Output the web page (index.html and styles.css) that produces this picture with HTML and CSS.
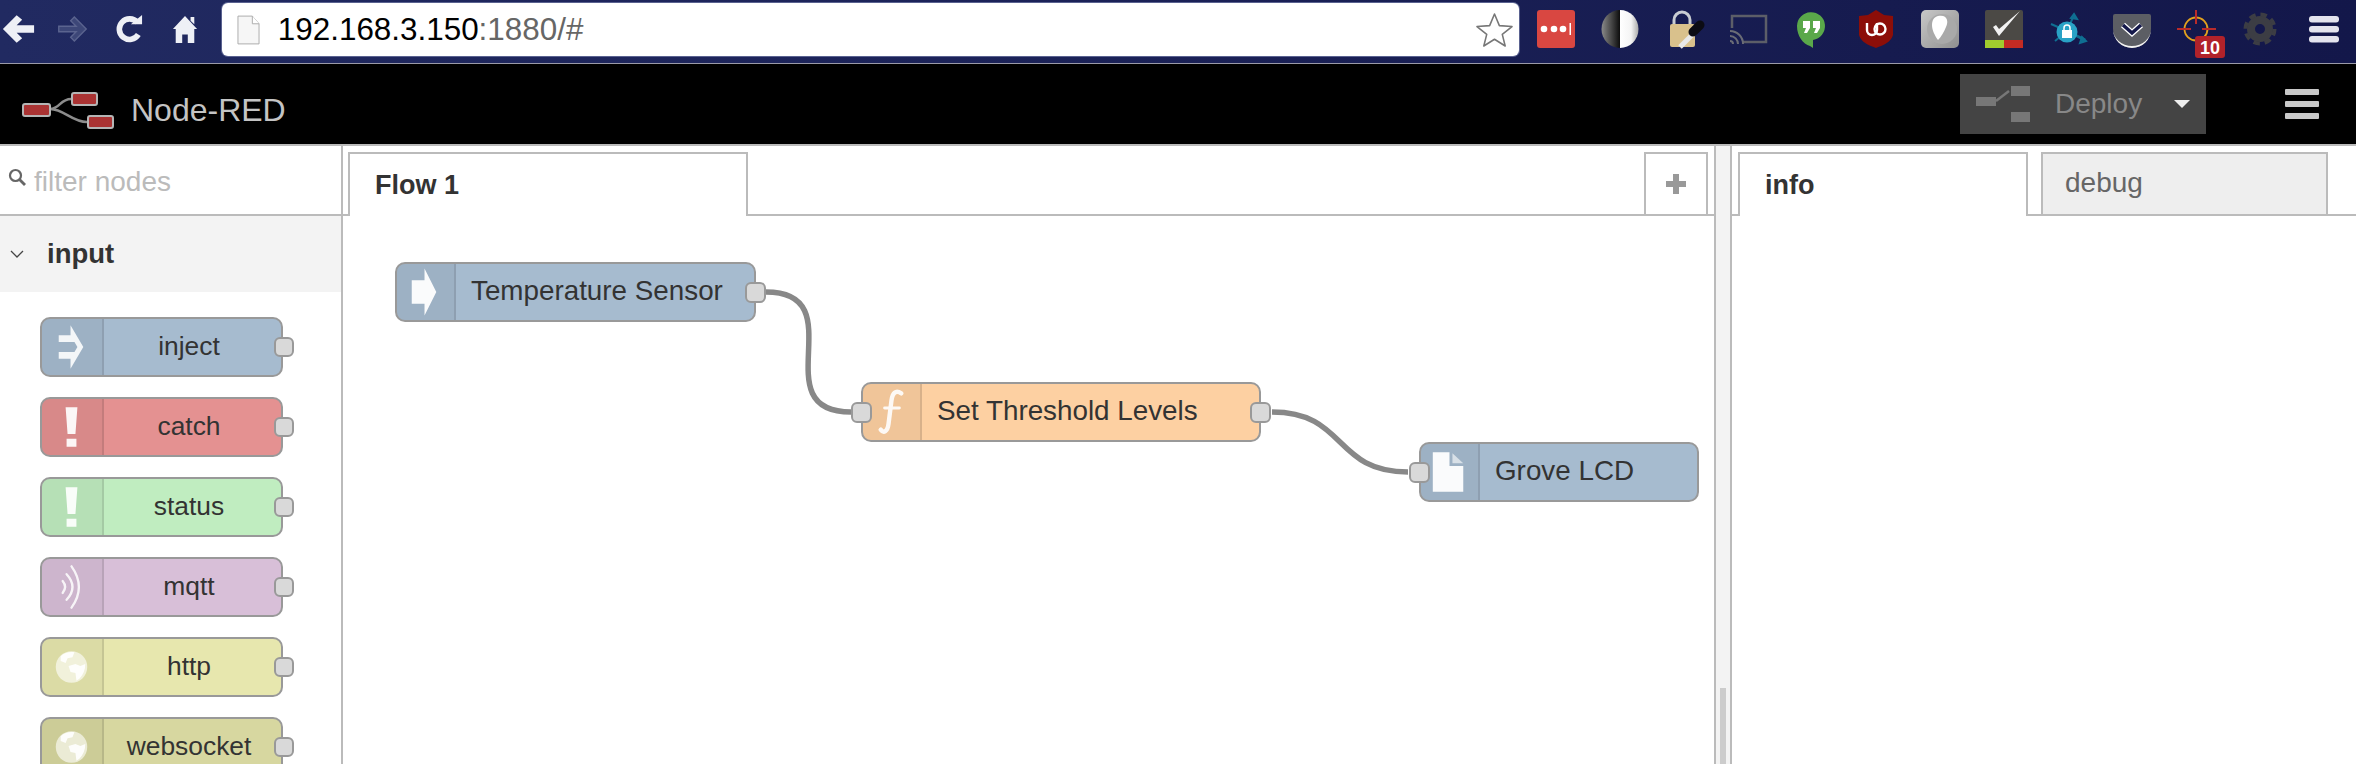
FILE: index.html
```html
<!DOCTYPE html>
<html lang="en">
<head>
<meta charset="utf-8">
<title>Node-RED</title>
<link rel="stylesheet" href="styles.css">
</head>
<body>
<div class="chrome">
  <div class="nav">
    <svg class="nav-icon back" viewBox="0 0 36 30"><path d="M16 0 1 15l15 15 6-5-6-6h19v-8H16l6-6z" fill="#eef0f6"/></svg>
    <svg class="nav-icon forward" viewBox="0 0 36 30"><path d="M20 2 33 15 20 28l-4-4 6-6H3v-6h19l-6-6z" fill="#3d4778" stroke="#5b648f" stroke-width="1.5"/></svg>
    <svg class="nav-icon reload" viewBox="0 0 30 30"><path d="M24 8A11 11 0 1 0 25 21" fill="none" stroke="#eef0f6" stroke-width="6"/><path d="M17 10h12V0z" fill="#eef0f6"/></svg>
    <svg class="nav-icon home" viewBox="0 0 28 30"><path d="M14 1 27 15h-3v15h-7v-9h-6v9H4V15H1z" fill="#eef0f6"/><path d="M20 2h4v8l-4-4z" fill="#eef0f6"/></svg>
  </div>
  <div class="omnibox">
    <svg class="page-icon" viewBox="0 0 24 31"><path d="M1 1h15l7 8v21H1z" fill="#f6f6f6" stroke="#aaa"/><path d="M16 1v8h7" fill="#fff" stroke="#aaa"/></svg>
    <span class="url"><span class="url-host">192.168.3.150</span>:1880/#</span>
    <svg class="star" viewBox="0 0 38 36"><path d="M19 2l5 12 13 1-10 8 3 12-11-7-11 7 3-12-10-8 13-1z" fill="#fff" stroke="#777" stroke-width="1.6" stroke-linejoin="round"/></svg>
  </div>
  <div class="extensions">
    <svg class="ext" viewBox="0 0 64 63"><rect x="13" y="10" width="38" height="38" rx="3" fill="#d94741"/><circle cx="20" cy="29" r="3.3" fill="#fff"/><circle cx="30" cy="29" r="3.3" fill="#fff"/><circle cx="39" cy="29" r="3.3" fill="#fff"/><rect x="45.500" y="23" width="1.500" height="12" fill="#fff"/></svg>
    <svg class="ext" viewBox="0 0 64 63"><defs><linearGradient id="contrast"><stop offset="0" stop-color="#8a8a8a"/><stop offset=".5" stop-color="#0c0c0c"/><stop offset=".5" stop-color="#fff"/><stop offset=".8" stop-color="#f4f4f4"/><stop offset="1" stop-color="#aaa"/></linearGradient></defs><ellipse cx="32" cy="29" rx="18.500" ry="19" fill="url(#contrast)"/></svg>
    <svg class="ext" viewBox="0 0 64 63"><path d="M22 25v-5a8 8 0 0 1 16 0v5" fill="none" stroke="#c8ccd2" stroke-width="3"/><rect x="18" y="24" width="25" height="23" rx="2" fill="#d9c18c"/><path d="M28 47 43 32" stroke="#e8e8e8" stroke-width="5"/><path d="M41 32 48 25" stroke="#0c0c14" stroke-width="9" stroke-linecap="round"/></svg>
    <svg class="ext" viewBox="0 0 64 63"><path d="M16 28V16h34v26H27" fill="none" stroke="#5c5e68" stroke-width="2.500"/><g fill="none" stroke="#6a6c76" stroke-width="2"><path d="M14 31a13 13 0 0 1 13 13"/><path d="M14 36a8 8 0 0 1 8 8"/><path d="M14 41a3 3 0 0 1 3 3"/></g></svg>
    <svg class="ext" viewBox="0 0 64 63"><path d="M17 26a14 14 0 1 1 16 14v8l-3-2c-7-2-13-10-13-20z" fill="#5aa84a"/><path d="M23 21h7v7l-3 5h-3l2-5h-3zM33 21h7v7l-3 5h-3l2-5h-3z" fill="#fff"/></svg>
    <svg class="ext" viewBox="0 0 64 63"><path d="M32 10 40 15 49 16V35C47 42 40 45 32 48 24 45 17 42 15 35V16L24 15z" fill="#8c0e08"/><path d="M23 23v7a5 5 0 0 0 10 0v-7" fill="none" stroke="#fff" stroke-width="2.400"/><circle cx="36" cy="29" r="5.500" fill="none" stroke="#fff" stroke-width="2.400"/></svg>
    <svg class="ext" viewBox="0 0 64 63"><defs><linearGradient id="greyext" x1="0" y1="0" x2="1" y2="1"><stop offset="0" stop-color="#c8c8c8"/><stop offset="1" stop-color="#8f8f8f"/></linearGradient></defs><rect x="13" y="10" width="38" height="38" rx="5" fill="url(#greyext)"/><circle cx="34" cy="29" r="15" fill="#a9a9a9"/><path d="M30 16c9-2 11 5 8 11-2 5-5 10-8 13-3-4-6-10-6-15 0-5 2-8 6-9z" fill="#fff"/></svg>
    <svg class="ext" viewBox="0 0 64 63"><rect x="13" y="10" width="38" height="38" rx="2" fill="#4b4945"/><rect x="13" y="40" width="19" height="8" fill="#a0cb2e"/><rect x="32" y="40" width="19" height="8" fill="#c32b23"/><path d="M21 27l6 9L48 11l-21 18-3-4z" fill="#f2f2f2"/></svg>
    <svg class="ext" viewBox="0 0 64 63"><g stroke="#0f6f92" stroke-width="2" fill="#0f6f92"><path d="M31 31 38 15"/><path d="M31 31 15 24"/><path d="M31 31 49 40" stroke-width="3"/><path d="M31 31 19 41"/><path d="M38 14l3 5-6-1zM50 41l-6 2 2-6z"/></g><circle cx="31" cy="32" r="10.500" fill="#29a2c6"/><rect x="26" y="30" width="10" height="8" fill="#fff"/><path d="M28 31v-3a3 3 0 0 1 6 0v3" fill="none" stroke="#fff" stroke-width="1.500"/></svg>
    <svg class="ext" viewBox="0 0 64 63"><path d="M13 16a2 2 0 0 1 2-2h34a2 2 0 0 1 2 2v13a19 19 0 0 1-38 0z" fill="#5c5e64"/><path d="M13 29a19 19 0 0 0 38 0 19 17 0 0 1-38 0z" fill="#f2f2f2"/><path d="M23 25l9 8 9-8" fill="none" stroke="#fff" stroke-width="6"/><path d="M23 25l9 8 9-8" fill="none" stroke="#14184a" stroke-width="3.500"/></svg>
    <svg class="ext" viewBox="0 0 64 63"><circle cx="32" cy="29" r="11.500" fill="none" stroke="#e2a11e" stroke-width="1.800"/><path d="M32 10v14M13 29h14M38 29h14" stroke="#b92b2b" stroke-width="2"/><rect x="31" y="36" width="30" height="22" rx="3" fill="#b1222a"/><text class="badge" x="46" y="54">10</text></svg>
    <svg class="ext" viewBox="0 0 64 63"><circle cx="32" cy="29" r="9" fill="none" stroke="#3c3d44" stroke-width="8"/><circle cx="32" cy="29" r="14.500" fill="none" stroke="#3c3d44" stroke-width="4" stroke-dasharray="6.500 4.890"/></svg>
    <svg class="ext" viewBox="0 0 64 63"><g fill="#e4e4ee"><rect x="17" y="16" width="30" height="6.500" rx="3"/><rect x="17" y="26" width="30" height="6.500" rx="3"/><rect x="17" y="36" width="30" height="6.500" rx="3"/></g></svg>
  </div>
</div>

<header class="app-header">
  <svg class="logo" viewBox="0 0 92 38"><g fill="none" stroke="#8c8c8c" stroke-width="2.500"><path d="M28 17C38 17 38 7 49 7"/><path d="M28 17C42 17 50 30 65 30"/></g><g fill="#aa3333" stroke="#b5b5b5" stroke-width="2"><rect x="1" y="12" width="27" height="12" rx="2"/><rect x="50" y="1" width="25" height="12" rx="2"/><rect x="66" y="24" width="25" height="12" rx="2"/></g></svg>
  <span class="app-title">Node-RED</span>
  <button class="deploy" type="button">
    <svg class="deploy-icon" viewBox="0 0 54 36"><g fill="#777"><rect x="0" y="11" width="20" height="9"/><rect x="35" y="0" width="19" height="10"/><rect x="35" y="26" width="19" height="10"/></g><path d="M20 15 33 5" stroke="#777" stroke-width="2.500" fill="none"/></svg>
    <span class="deploy-label">Deploy</span>
    <span class="deploy-caret"></span>
  </button>
  <div class="menu-button"><span></span><span></span><span></span></div>
</header>

<main class="main">
  <aside class="palette">
    <div class="filter">
      <svg class="search" viewBox="0 0 18 18"><circle cx="7.500" cy="7.500" r="5.500" fill="none" stroke="#666" stroke-width="2.200"/><path d="M11.500 11.500 17 17" stroke="#666" stroke-width="2.800"/></svg>
      <span class="filter-text">filter nodes</span>
    </div>
    <div class="category">
      <svg class="chevron" viewBox="0 0 14 8"><path d="M1 1l6 6 6-6" fill="none" stroke="#444" stroke-width="1.300"/></svg>
      <span class="category-name">input</span>
    </div>
    <div class="palette-list">
      <div class="pnode blue">
        <div class="pnode-icon"><svg viewBox="0 0 61 56"><path d="M17 16H29V6L42 28 29 50V40H17V33H33L36 28 33 23H17Z" fill="#fff" opacity=".88"/></svg></div>
        <div class="pnode-label">inject</div><span class="pport"></span>
      </div>
      <div class="pnode red">
        <div class="pnode-icon"><svg viewBox="0 0 61 56"><path d="M24 8H36L34 35H26ZM25 40H35V48H25Z" fill="#fff" opacity=".92"/></svg></div>
        <div class="pnode-label">catch</div><span class="pport"></span>
      </div>
      <div class="pnode green">
        <div class="pnode-icon"><svg viewBox="0 0 61 56"><path d="M24 8H36L34 35H26ZM25 40H35V48H25Z" fill="#fff" opacity=".92"/></svg></div>
        <div class="pnode-label">status</div><span class="pport"></span>
      </div>
      <div class="pnode purple">
        <div class="pnode-icon"><svg viewBox="0 0 61 56"><g fill="none" stroke="#fff" stroke-width="2.400" stroke-linecap="round" opacity=".85"><path d="M30 7Q45 28 30 49"/><path d="M25 15Q37 28 25 41"/><path d="M21 22Q26 28 21 34"/></g></svg></div>
        <div class="pnode-label">mqtt</div><span class="pport"></span>
      </div>
      <div class="pnode yellow">
        <div class="pnode-icon"><svg viewBox="0 0 61 56"><circle cx="30" cy="28" r="16" fill="#fff" opacity=".6"/><path d="M19 17c4-4 10-5 14-4l-2 5-5 1-2 5-5-2zM27 27l7-2 5 2 5-2c0 6-2 11-6 15l-3 2-1-8-5-1z" fill="#fff" opacity=".9"/></svg></div>
        <div class="pnode-label">http</div><span class="pport"></span>
      </div>
      <div class="pnode olive">
        <div class="pnode-icon"><svg viewBox="0 0 61 56"><circle cx="30" cy="28" r="16" fill="#fff" opacity=".6"/><path d="M19 17c4-4 10-5 14-4l-2 5-5 1-2 5-5-2zM27 27l7-2 5 2 5-2c0 6-2 11-6 15l-3 2-1-8-5-1z" fill="#fff" opacity=".9"/></svg></div>
        <div class="pnode-label">websocket</div><span class="pport"></span>
      </div>
    </div>
  </aside>

  <section class="workspace">
    <div class="tabs">
      <div class="tab flow-tab">Flow 1</div>
      <div class="add-tab"><svg viewBox="0 0 22 22"><path d="M11 1v20M1 11h20" stroke="#999" stroke-width="6"/></svg></div>
    </div>
    <div class="canvas">
      <svg class="wires" viewBox="0 0 1371 548"><g fill="none" stroke="#888" stroke-width="5.500"><path d="M423 76C513 76 418 196 508 196"/><path d="M929 196C1004 196 990 256 1065 256"/></g></svg>
      <div class="fnode blue temp">
        <div class="fnode-icon narrow"><svg viewBox="0 0 58 56"><path d="M15 16H28V4L40 28 28 52V40H15Z" fill="#fff" opacity=".95"/></svg></div>
        <div class="fnode-label">Temperature Sensor</div><span class="port out"></span>
      </div>
      <div class="fnode orange thresh">
        <span class="port in"></span>
        <div class="fnode-icon"><svg viewBox="0 0 58 56"><g fill="none" stroke="#fff" opacity=".9" stroke-linecap="round"><path d="M39 9C33 5 30 9 29 16L26 40C25 48 21 50 18 46" stroke-width="4.500"/><path d="M22 24H37" stroke-width="3"/></g></svg></div>
        <div class="fnode-label">Set Threshold Levels</div><span class="port out"></span>
      </div>
      <div class="fnode blue lcd">
        <span class="port in"></span>
        <div class="fnode-icon"><svg viewBox="0 0 58 56"><path d="M12 8H29V22H43V48H12Z" fill="#fff" opacity=".95"/><path d="M32 9 43 19H32Z" fill="#fff" opacity=".6"/></svg></div>
        <div class="fnode-label">Grove LCD</div>
      </div>
    </div>
  </section>

  <div class="separator"><span class="scroll-thumb"></span></div>

  <aside class="sidebar">
    <div class="tabs side-tabs">
      <div class="tab info-tab">info</div>
      <div class="debug-tab">debug</div>
    </div>
  </aside>
</main>
</body>
</html>
```

FILE: styles.css
```css
* {
  box-sizing: border-box;
}

html,
body {
  margin: 0;
  height: 764px;
  overflow: hidden;
  background: #fff;
  font-family: "Liberation Sans", Arial, sans-serif;
  color: #333;
}

body {
  display: flex;
  flex-direction: column;
}

/* Browser chrome */
.chrome {
  flex: 0 0 64px;
  display: flex;
  align-items: flex-start;
  background: linear-gradient(90deg, #212a61 0%, #1c2359 40%, #13174a 100%);
  border-bottom: 1px solid #9a9aa8;
}

.nav {
  position: relative;
  width: 222px;
  height: 63px;
}

.nav-icon {
  position: absolute;
  top: 15px;
  height: 28px;
}

.back { left: 2px; width: 33px; }
.forward { left: 56px; width: 33px; }
.reload { left: 115px; width: 28px; }
.home { left: 172px; width: 26px; }

.omnibox {
  width: 1298px;
  height: 53px;
  margin-top: 3px;
  display: flex;
  align-items: center;
  padding: 0 6px 0 15px;
  background: #fff;
  border-radius: 6px;
  box-shadow: 0 0 0 1px #5a6290;
}

.page-icon {
  width: 23px;
  height: 30px;
  flex: none;
}

.url {
  margin-left: 18px;
  flex: 1;
  font-size: 31.4px;
  line-height: 53px;
  color: #666;
  white-space: nowrap;
}

.url-host {
  color: #000;
}

.star {
  width: 37px;
  height: 35px;
  flex: none;
}

.extensions {
  display: flex;
  margin-left: 5px;
}

.ext {
  width: 64px;
  height: 63px;
  flex: none;
}

.badge {
  font-size: 18px;
  font-weight: 700;
  fill: #fff;
  text-anchor: middle;
}

/* App header */
.app-header {
  flex: 0 0 82px;
  display: flex;
  align-items: flex-start;
  background: #000;
  border-bottom: 2px solid #bbb;
}

.logo {
  width: 92px;
  height: 38px;
  margin: 28px 0 0 22px;
  flex: none;
}

.app-title {
  margin-left: 17px;
  font-size: 32px;
  line-height: 92px;
  height: 80px;
  color: #c4c4c4;
}

.deploy {
  width: 246px;
  height: 60px;
  margin: 10px 0 0 auto;
  padding: 0;
  border: 0;
  background: #444;
  display: flex;
  align-items: center;
  font-family: inherit;
}

.deploy-icon {
  width: 54px;
  height: 36px;
  margin-left: 16px;
  flex: none;
}

.deploy-label {
  margin-left: 25px;
  font-size: 28px;
  color: #888;
}

.deploy-caret {
  width: 0;
  height: 0;
  margin-left: 32px;
  border-style: solid;
  border-width: 8px 8.500px 0;
  border-color: #eee transparent transparent;
}

.menu-button {
  width: 34px;
  margin: 25px 37px 0 79px;
  display: flex;
  flex-direction: column;
  gap: 6px;
}

.menu-button span {
  display: block;
  height: 6px;
  border-radius: 1px;
  background: #c8c8c8;
}

/* Main row */
.main {
  flex: 1;
  min-height: 0;
  display: flex;
}

.palette {
  flex: 0 0 343px;
  border-right: 2px solid #bbb;
  overflow: hidden;
}

.filter {
  height: 70px;
  display: flex;
  align-items: center;
  padding: 0 0 0 8px;
  border-bottom: 2px solid #bbb;
}

.search {
  width: 18px;
  height: 18px;
  margin-top: -6px;
  flex: none;
}

.filter-text {
  margin-left: 8px;
  margin-top: 4px;
  font-size: 28px;
  color: #bbb;
}

.category {
  height: 76px;
  display: flex;
  align-items: center;
  padding-left: 10px;
  background: #f3f3f3;
}

.chevron {
  width: 14px;
  height: 8px;
  flex: none;
}

.category-name {
  margin-left: 23px;
  font-size: 27.500px;
  font-weight: 700;
}

.palette-list {
  display: flex;
  flex-direction: column;
  gap: 20px;
  padding: 25px 0 0 40px;
}

.pnode,
.fnode {
  position: relative;
  flex: none;
  height: 60px;
  display: flex;
  border: 2px solid #999;
  border-radius: 10px;
}

.pnode {
  width: 243px;
}

.blue { background: #a6bbcf; }
.red { background: #e49191; }
.green { background: #c0edc0; }
.purple { background: #d8bfd8; }
.yellow { background: #e7e7ae; }
.olive { background: #d7d7a0; }
.orange { background: #fdd0a2; }

.pnode-icon,
.fnode-icon {
  flex: none;
  height: 100%;
  background: rgba(0, 0, 0, 0.05);
  border-right: 2px solid rgba(0, 0, 0, 0.1);
  border-radius: 8px 0 0 8px;
}

.pnode-icon {
  width: 62px;
}

.fnode-icon {
  width: 59px;
}

.pnode-icon svg,
.fnode-icon svg {
  display: block;
  height: 56px;
}

.pnode-icon svg {
  width: 60px;
}

.fnode-icon svg {
  width: 57px;
}

.pnode-label {
  flex: 1;
  padding-right: 7px;
  text-align: center;
  font-size: 26.400px;
  line-height: 54px;
}

.pport {
  position: absolute;
  top: 18px;
  right: -13px;
  width: 20px;
  height: 20px;
  background: #d9d9d9;
  border: 2px solid #999;
  border-radius: 6px;
}

/* Tabs */
.workspace {
  flex: 1;
  min-width: 0;
  display: flex;
  flex-direction: column;
}

.tabs {
  flex: 0 0 70px;
  display: flex;
  align-items: flex-end;
  border-bottom: 2px solid #bbb;
  padding: 0 6px 0 5px;
}

.tab {
  height: 64px;
  margin-bottom: -2px;
  background: #fff;
  border: 2px solid #bbb;
  border-bottom: 0;
  font-weight: 700;
  font-size: 27px;
  line-height: 62px;
}

.flow-tab {
  width: 400px;
  padding-left: 25px;
}

.add-tab {
  width: 64px;
  height: 62px;
  margin-left: auto;
  display: flex;
  align-items: center;
  justify-content: center;
  border: 2px solid #bbb;
  border-bottom: 0;
}

.add-tab svg {
  width: 22px;
  height: 22px;
}

.canvas {
  position: relative;
  flex: 1;
  min-height: 0;
}

.wires {
  position: absolute;
  inset: 0;
  width: 1371px;
  height: 548px;
}

.fnode {
  position: absolute;
}

.fnode-label {
  padding-left: 15px;
  font-size: 27.800px;
  line-height: 53px;
  white-space: nowrap;
}

.temp { left: 52px; top: 46px; width: 361px; }
.thresh { left: 518px; top: 166px; width: 400px; }
.lcd { left: 1076px; top: 226px; width: 280px; }

.port {
  position: absolute;
  top: 18px;
  width: 21px;
  height: 21px;
  z-index: 1;
  background: #d9d9d9;
  border: 2px solid #999;
  border-radius: 6px;
}

.port.out { right: -12px; }
.port.in { left: -12px; }

/* Separator and sidebar */
.separator {
  position: relative;
  flex: 0 0 18px;
  background: #f3f3f3;
  border-left: 2px solid #bbb;
  border-right: 2px solid #bbb;
}

.scroll-thumb {
  position: absolute;
  left: 4px;
  right: 4px;
  top: 542px;
  bottom: 0;
  background: #ccc;
}

.sidebar {
  flex: 0 0 624px;
  display: flex;
  flex-direction: column;
}

.side-tabs {
  padding: 0 0 0 6px;
}

.info-tab {
  width: 290px;
  padding-left: 25px;
}

.debug-tab {
  width: 287px;
  height: 62px;
  margin-left: 13px;
  padding-left: 22px;
  background: #eee;
  border: 2px solid #bbb;
  border-bottom: 0;
  font-size: 28px;
  line-height: 58px;
  color: #666;
}
```
